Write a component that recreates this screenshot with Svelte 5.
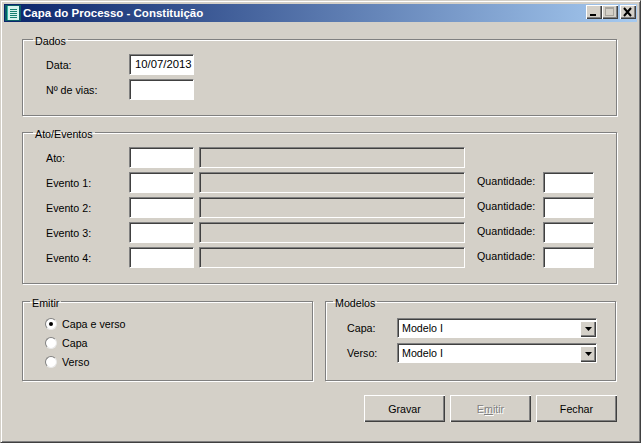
<script>
	const eventos = ['Evento 1:', 'Evento 2:', 'Evento 3:', 'Evento 4:'];
	const opcoes = [
		{ label: 'Capa e verso', checked: true },
		{ label: 'Capa', checked: false },
		{ label: 'Verso', checked: false }
	];
	const modelos = ['Capa:', 'Verso:'];
</script>

<div class="window">
	<div class="titlebar">
		<svg class="appicon" width="16" height="16" viewBox="0 0 16 16">
			<rect width="16" height="16" fill="#0c5f66" />
			<rect x="2" y="1" width="12" height="14" fill="#d8f4ee" />
			<rect x="2" y="1" width="1" height="14" fill="#36b8a4" />
			<path d="M5 4.500h7M5 6.500h7M5 8.500h7M5 10.500h7M5 12.500h7" stroke="#16806f" />
		</svg>
		<span class="title">Capa do Processo - Constituição</span>
		<div class="caption">
			<button class="capbtn" aria-label="Minimizar">
				<svg width="16" height="14" viewBox="0 0 16 14"><rect x="4" y="9" width="6" height="2" fill="#000" /></svg>
			</button>
			<button class="capbtn" aria-label="Maximizar">
				<svg width="16" height="14" viewBox="0 0 16 14"><rect x="3.500" y="2.500" width="8" height="8" fill="none" stroke="#a8a59e" /><rect x="3" y="2" width="9" height="2" fill="#a8a59e" /></svg>
			</button>
			<button class="capbtn close" aria-label="Fechar">
				<svg width="16" height="14" viewBox="0 0 16 14"><path d="M4 3l7 8M11 3l-7 8" stroke="#000" stroke-width="2" /></svg>
			</button>
		</div>
	</div>

	<div class="body">
		<fieldset class="dados">
			<legend>Dados</legend>
			<div class="row">
				<label>Data:</label>
				<div class="field short value">10/07/2013</div>
			</div>
			<div class="row">
				<label>Nº de vias:</label>
				<div class="field short"></div>
			</div>
		</fieldset>

		<fieldset class="ato">
			<legend>Ato/Eventos</legend>
			<div class="row">
				<label>Ato:</label>
				<div class="field short"></div>
				<div class="field wide"></div>
			</div>
			{#each eventos as evento}
				<div class="row">
					<label>{evento}</label>
					<div class="field short"></div>
					<div class="field wide"></div>
					<span class="qty">Quantidade:</span>
					<div class="field tiny"></div>
				</div>
			{/each}
		</fieldset>

		<div class="split">
			<fieldset class="emitir">
				<legend>Emitir</legend>
				{#each opcoes as op}
					<div class="radio-row">
						<span class="radio" class:checked={op.checked}></span>
						<span>{op.label}</span>
					</div>
				{/each}
			</fieldset>
			<fieldset class="modelos">
				<legend>Modelos</legend>
				{#each modelos as m}
					<div class="combo-row">
						<label>{m}</label>
						<div class="combo">
							<span>Modelo I</span>
							<span class="arrow">
								<svg width="7" height="4" viewBox="0 0 7 4"><path d="M0 0h7L3.500 4z" fill="#000" /></svg>
							</span>
						</div>
					</div>
				{/each}
			</fieldset>
		</div>

		<div class="actions">
			<button class="btn">Gravar</button>
			<button class="btn" disabled>E<u>m</u>itir</button>
			<button class="btn">Fechar</button>
		</div>
	</div>
</div>

<style>
	:global(body) {
		margin: 0;
		background: #d4d0c8;
	}
	.window {
		box-sizing: border-box;
		width: 641px;
		height: 443px;
		background: #d4d0c8;
		border: 1px solid #d4d0c8;
		border-right-color: #404040;
		border-bottom-color: #404040;
		box-shadow: inset 1px 1px 0 #fff, inset -1px -1px 0 #808080;
		padding: 3px;
		font-family: 'Liberation Sans', sans-serif;
		font-size: 10.7px;
		color: #000;
		display: flex;
		flex-direction: column;
	}
	.titlebar {
		height: 18px;
		flex: none;
		display: flex;
		align-items: center;
		background: linear-gradient(90deg, #0a246a, #a6caf0);
		padding: 0 1px 0 1px;
	}
	.appicon {
		margin-right: 2px;
	}
	.title {
		color: #fff;
		font-weight: bold;
		font-size: 11.5px;
		flex: 1;
	}
	.caption {
		display: flex;
		align-self: flex-start;
		margin-top: 1px;
	}
	.capbtn {
		box-sizing: border-box;
		width: 16px;
		height: 14px;
		padding: 0;
		background: #d4d0c8;
		border: none;
		box-shadow: inset 1px 1px 0 #fff, inset -1px -1px 0 #404040, inset -2px -2px 0 #808080;
		display: block;
	}
	.capbtn svg {
		display: block;
	}
	.capbtn.close {
		margin-left: 2px;
	}
	.body {
		flex: 1;
		padding: 11px 20px 0 18px;
		display: flex;
		flex-direction: column;
	}
	fieldset {
		box-sizing: border-box;
		margin: 0;
		min-width: 0;
		border: 1px solid #808080;
		box-shadow: 1px 1px 0 #fff, inset 1px 1px 0 #fff;
		padding: 0 0 0 23px;
	}
	legend {
		padding: 3px 2px 0;
		margin-left: -13px;
		line-height: 10px;
	}
	.dados {
		height: 83px;
		padding-top: 8px;
		display: flex;
		flex-direction: column;
		gap: 4px;
	}
	.ato {
		height: 158px;
		margin-top: 10px;
		padding-top: 8px;
		display: flex;
		flex-direction: column;
		gap: 4px;
	}
	.row {
		display: flex;
		align-items: center;
		height: 21px;
	}
	.row label {
		width: 83px;
		flex: none;
	}
	.field {
		box-sizing: border-box;
		height: 21px;
		border: 1px solid #fff;
		border-top-color: #808080;
		border-left-color: #808080;
		background: #fff;
		box-shadow: inset 1px 1px 0 #404040;
		flex: none;
	}
	.short {
		width: 65px;
	}
	.value {
		padding: 3px 0 0 5px;
		white-space: nowrap;
		overflow: hidden;
		font-size: 11.3px;
	}
	.wide {
		width: 266px;
		margin-left: 5px;
		background: #d4d0c8;
	}
	.qty {
		margin-left: 12px;
		padding-bottom: 3px;
		width: 66px;
		flex: none;
	}
	.tiny {
		width: 51px;
	}
	.split {
		display: flex;
		gap: 12px;
		margin-top: 11px;
	}
	.emitir,
	.modelos {
		width: 291px;
		height: 86px;
	}
	.emitir legend {
		margin-left: -15px;
	}
	.modelos legend {
		margin-left: -14px;
	}
	.emitir {
		padding: 6px 0 0 22px;
	}
	.radio-row {
		display: flex;
		align-items: center;
		height: 19px;
		gap: 5px;
	}
	.radio {
		box-sizing: border-box;
		width: 12px;
		height: 12px;
		border-radius: 50%;
		background: #fff;
		border: 1px solid #808080;
		border-right-color: #e8e8e8;
		border-bottom-color: #e8e8e8;
		display: flex;
		align-items: center;
		justify-content: center;
	}
	.radio.checked::after {
		content: '';
		width: 4px;
		height: 4px;
		border-radius: 50%;
		background: #000;
	}
	.modelos {
		padding: 10px 0 0 21px;
		display: flex;
		flex-direction: column;
		gap: 5px;
	}
	.combo-row {
		display: flex;
		align-items: center;
		height: 20px;
	}
	.combo-row label {
		width: 50px;
		flex: none;
	}
	.combo {
		box-sizing: border-box;
		width: 200px;
		height: 20px;
		background: #fff;
		border: 1px solid #fff;
		border-top-color: #808080;
		border-left-color: #808080;
		box-shadow: inset 1px 1px 0 #404040;
		display: flex;
		align-items: center;
		justify-content: space-between;
		padding: 0 0 0 4px;
	}
	.arrow {
		box-sizing: border-box;
		width: 16px;
		height: 16px;
		margin-top: 1px;
		background: #d4d0c8;
		box-shadow: inset 1px 1px 0 #fff, inset -1px -1px 0 #404040, inset -2px -2px 0 #808080;
		display: flex;
		align-items: center;
		justify-content: center;
	}
	.arrow svg {
		display: block;
	}
	.actions {
		display: flex;
		justify-content: flex-end;
		gap: 5px;
		margin-top: 14px;
	}
	.btn {
		box-sizing: border-box;
		width: 81px;
		height: 27px;
		padding: 0;
		background: #d4d0c8;
		border: none;
		box-shadow: inset 1px 1px 0 #fff, inset -1px -1px 0 #404040, inset -2px -2px 0 #808080;
		font: inherit;
		color: #000;
	}
	.btn:disabled {
		color: #808080;
		text-shadow: 1px 1px 0 #fff;
	}
</style>
